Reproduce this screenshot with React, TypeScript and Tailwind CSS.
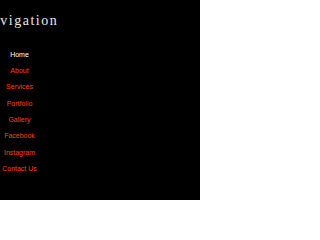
export default function App() {
  const links = [
    "About",
    "Services",
    "Portfolio",
    "Gallery",
    "Facebook",
    "Instagram",
    "Contact Us",
  ];
  return (
    <div className="w-[200px] h-[200px] bg-black overflow-hidden">
      <h1 className="ml-[-19px] pt-[11px] text-[14px] leading-[20px] tracking-[1.5px] text-[#e8e8e8] font-['Liberation_Serif',serif] whitespace-nowrap">
        Navigation
      </h1>
      <ul className="w-[39px] mt-[15.5px] flex flex-col text-center text-[7px] leading-[16.35px] font-['Liberation_Sans',Arial,sans-serif] whitespace-nowrap">
        <li className="text-white">Home</li>
        {links.map((l) => (
          <li key={l} className="text-[#ff4000]">
            {l}
          </li>
        ))}
      </ul>
    </div>
  );
}
